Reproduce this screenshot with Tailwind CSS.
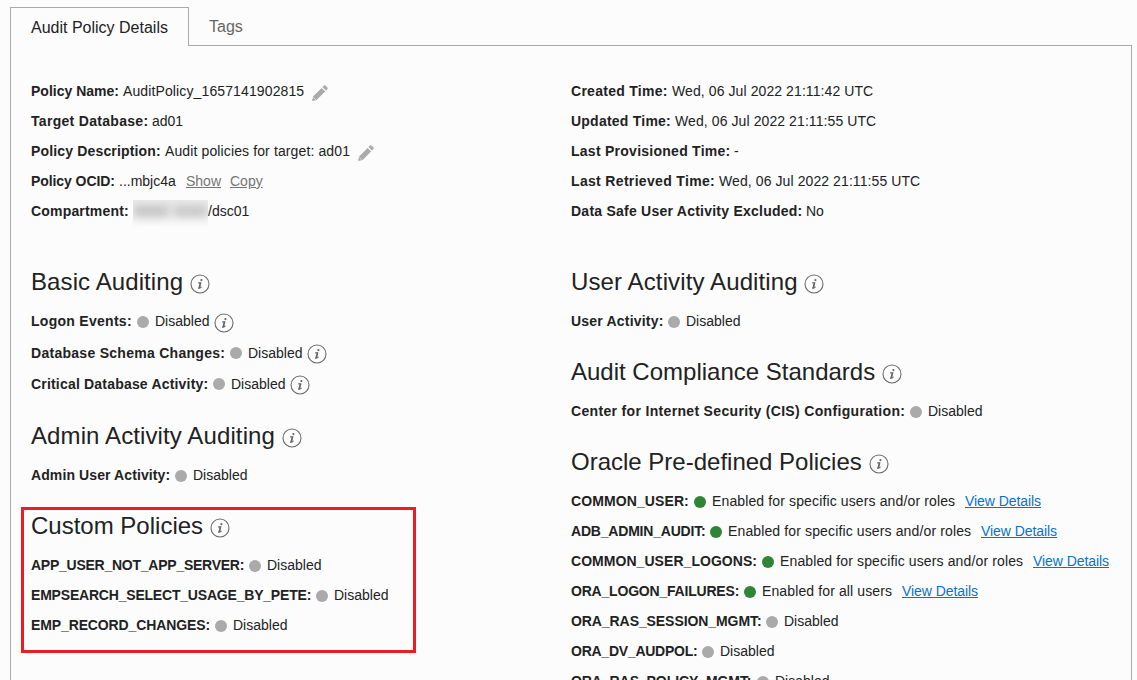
<!DOCTYPE html>
<html lang="en">
<head>
<meta charset="utf-8">
<title>Audit Policy Details</title>
<script src="https://cdn.jsdelivr.net/npm/@tailwindcss/browser@4"></script>
</head>
<body class="h-[680px] overflow-hidden bg-[#fcfcfc] font-['Liberation_Sans',Arial,sans-serif] text-sm leading-[30px] whitespace-nowrap text-[#222]">
<svg class="hidden">
  <symbol id="info" viewBox="0 0 20 20"><circle cx="10" cy="10" r="9" fill="none" stroke="#6c6c6c" stroke-width="1.1"/><circle cx="11.4" cy="6.1" r="1.1" fill="#666"/><path d="M8.2 8.900H10.700L9.300 14.100M8 14.100H9.600Q10.800 14 11.500 12.800" fill="none" stroke="#666" stroke-width="1.1"/><path d="M10.500 8.700L9.200 13.900" fill="none" stroke="#666" stroke-width="1.5"/></symbol>
  <symbol id="pencil" viewBox="0 0 16 16"><path fill="#aaa" d="M0 16L1.100 11.400 9.600 2.900 13.100 6.400 4.600 14.900ZM10.500 2L12 .5Q12.700 0 13.400.5L15.500 2.600Q16 3.300 15.500 4L14 5.500Z"/><path stroke="#fcfcfc" stroke-width=".6" d="M1.300 12.300L3.700 14.700"/></symbol>
</svg>
<div class="flex h-full flex-col pt-[7px] pr-[5px] pl-2.5">
  <nav class="flex h-[39px] shrink-0 text-base">
    <div class="w-[179px] border border-b-0 border-[#aaa] pt-2 pl-5 leading-[24px]"><span class="block pt-px leading-[22px]">Audit Policy Details</span></div>
    <div class="grow border-b border-[#aaa] pt-2 pl-5 leading-[24px] text-[#666]">Tags</div>
  </nav>
  <main class="grid grow grid-cols-[540px_1fr] border-x border-[#aaa] pt-[30px] pl-5">
    <div>
      <section class="h-[180px]">
        <div class="flex h-[30px]"><b class="w-[92px]">Policy Name:</b><span class="w-[189px] tracking-[0.12px]">AuditPolicy_1657141902815</span><svg class="mt-[9px] size-4"><use href="#pencil"/></svg></div>
        <div class="flex h-[30px]"><b class="w-[121px] tracking-[0.3px]">Target Database:</b><span>ad01</span></div>
        <div class="flex h-[30px]"><b class="w-[134px] tracking-[0.16px]">Policy Description:</b><span class="w-[193px] tracking-[0.12px]">Audit policies for target: ad01</span><svg class="mt-[9px] size-4"><use href="#pencil"/></svg></div>
        <div class="flex h-[30px]"><b class="w-[88px] tracking-[-0.08px]">Policy OCID:</b><span class="w-[67px]">...mbjc4a</span><a class="w-11 text-[#757575] underline">Show</a><a class="text-[#757575] underline">Copy</a></div>
        <div class="flex h-[30px]"><b class="w-[102px] tracking-[0.18px]">Compartment:</b><span class="mt-1 flex h-[26px] w-[75px] items-center gap-1 overflow-hidden bg-linear-to-b from-[#ededed] to-[#fbfbfb] pb-1"><i class="h-3 w-9 bg-[#c2c2c2] blur-[5px]"></i><i class="h-3 w-9 bg-[#c6c6c6] blur-[5px]"></i></span><span>/dsc01</span></div>
      </section>
      <section class="mb-2.5">
        <h2 class="flex h-[50px] gap-[7px] pt-[11px] text-2xl leading-[30px]"><span class="w-[152px] tracking-[0.1px]">Basic Auditing</span><svg class="mt-[7px] size-5"><use href="#info"/></svg></h2>
        <div class="flex h-8"><b class="w-[106px] tracking-[0.28px]">Logon Events:</b><i class="mt-[10px] mr-1.5 size-3 rounded-full bg-[#aaa]"></i><span class="w-[59px]">Disabled</span><svg class="mt-[7px] size-5"><use href="#info"/></svg></div>
        <div class="flex h-[31px]"><b class="w-[199px] tracking-[0.28px]">Database Schema Changes:</b><i class="mt-[9px] mr-1.5 size-3 rounded-full bg-[#aaa]"></i><span class="w-[59px]">Disabled</span><svg class="mt-1.5 size-5"><use href="#info"/></svg></div>
        <div class="flex h-[31px]"><b class="w-[182px] tracking-[0.19px]">Critical Database Activity:</b><i class="mt-[9px] mr-1.5 size-3 rounded-full bg-[#aaa]"></i><span class="w-[59px]">Disabled</span><svg class="mt-1.5 size-5"><use href="#info"/></svg></div>
      </section>
      <section class="mb-2.5">
        <h2 class="flex h-[50px] gap-[7px] pt-[11px] text-2xl leading-[30px]"><span class="w-[244px] tracking-[0.11px]">Admin Activity Auditing</span><svg class="mt-[7px] size-5"><use href="#info"/></svg></h2>
        <div class="flex h-[30px]"><b class="w-[144px] tracking-[0.1px]">Admin User Activity:</b><i class="mt-[10px] mr-1.5 size-3 rounded-full bg-[#aaa]"></i><span>Disabled</span></div>
      </section>
      <section class="relative">
        <div class="absolute top-[7px] -left-2.5 h-[146px] w-[395px] border-3 border-[#ed1c24]"></div>
        <h2 class="flex h-[50px] gap-[7px] pt-[11px] text-2xl leading-[30px]"><span class="w-[172px]">Custom Policies</span><svg class="mt-[7px] size-5"><use href="#info"/></svg></h2>
        <div class="flex h-[30px]"><b class="w-[218px] tracking-[-0.25px]">APP_USER_NOT_APP_SERVER:</b><i class="mt-[10px] mr-1.5 size-3 rounded-full bg-[#aaa]"></i><span>Disabled</span></div>
        <div class="flex h-[30px]"><b class="w-[285px] tracking-[-0.2px]">EMPSEARCH_SELECT_USAGE_BY_PETE:</b><i class="mt-[10px] mr-1.5 size-3 rounded-full bg-[#aaa]"></i><span>Disabled</span></div>
        <div class="flex h-[30px]"><b class="w-[184px] tracking-[-0.12px]">EMP_RECORD_CHANGES:</b><i class="mt-[10px] mr-1.5 size-3 rounded-full bg-[#aaa]"></i><span>Disabled</span></div>
      </section>
    </div>
    <div>
      <section class="h-[180px]">
        <div class="flex h-[30px]"><b class="w-[101px] tracking-[0.27px]">Created Time:</b><span class="tracking-[0.09px]">Wed, 06 Jul 2022 21:11:42 UTC</span></div>
        <div class="flex h-[30px]"><b class="w-[104px] tracking-[0.23px]">Updated Time:</b><span class="tracking-[0.09px]">Wed, 06 Jul 2022 21:11:55 UTC</span></div>
        <div class="flex h-[30px]"><b class="w-[163px] tracking-[0.26px]">Last Provisioned Time:</b><span>-</span></div>
        <div class="flex h-[30px]"><b class="w-[148px] tracking-[0.33px]">Last Retrieved Time:</b><span class="tracking-[0.09px]">Wed, 06 Jul 2022 21:11:55 UTC</span></div>
        <div class="flex h-[30px]"><b class="w-[235px] tracking-[0.24px]">Data Safe User Activity Excluded:</b><span>No</span></div>
      </section>
      <section class="mb-2.5">
        <h2 class="flex h-[50px] gap-[7px] pt-[11px] text-2xl leading-[30px]"><span class="w-[226px] tracking-[0.12px]">User Activity Auditing</span><svg class="mt-[7px] size-5"><use href="#info"/></svg></h2>
        <div class="flex h-[30px]"><b class="w-[97px] tracking-[0.2px]">User Activity:</b><i class="mt-[10px] mr-1.5 size-3 rounded-full bg-[#aaa]"></i><span>Disabled</span></div>
      </section>
      <section class="mb-2.5">
        <h2 class="flex h-[50px] gap-[7px] pt-[11px] text-2xl leading-[30px]"><span class="w-[304px]">Audit Compliance Standards</span><svg class="mt-[7px] size-5"><use href="#info"/></svg></h2>
        <div class="flex h-[30px]"><b class="w-[339px] tracking-[0.33px]">Center for Internet Security (CIS) Configuration:</b><i class="mt-[10px] mr-1.5 size-3 rounded-full bg-[#aaa]"></i><span>Disabled</span></div>
      </section>
      <section>
        <h2 class="flex h-[50px] gap-[7px] pt-[11px] text-2xl leading-[30px]"><span class="w-[291px]">Oracle Pre-defined Policies</span><svg class="mt-[7px] size-5"><use href="#info"/></svg></h2>
        <div class="flex h-[30px]"><b class="w-[123px] tracking-[0.1px]">COMMON_USER:</b><i class="mt-[10px] mr-1.5 size-3 rounded-full bg-[#2f8436]"></i><span class="w-[253px] tracking-[0.13px]">Enabled for specific users and/or roles</span><a class="tracking-[-0.06px] text-[#0572ce] underline">View Details</a></div>
        <div class="flex h-[30px]"><b class="w-[139px] tracking-[-0.2px]">ADB_ADMIN_AUDIT:</b><i class="mt-[10px] mr-1.5 size-3 rounded-full bg-[#2f8436]"></i><span class="w-[253px] tracking-[0.13px]">Enabled for specific users and/or roles</span><a class="tracking-[-0.06px] text-[#0572ce] underline">View Details</a></div>
        <div class="flex h-[30px]"><b class="w-[191px] tracking-[0.05px]">COMMON_USER_LOGONS:</b><i class="mt-[10px] mr-1.5 size-3 rounded-full bg-[#2f8436]"></i><span class="w-[253px] tracking-[0.13px]">Enabled for specific users and/or roles</span><a class="tracking-[-0.06px] text-[#0572ce] underline">View Details</a></div>
        <div class="flex h-[30px]"><b class="w-[173px] tracking-[-0.2px]">ORA_LOGON_FAILURES:</b><i class="mt-[10px] mr-1.5 size-3 rounded-full bg-[#2f8436]"></i><span class="w-[140px] tracking-[0.12px]">Enabled for all users</span><a class="tracking-[-0.06px] text-[#0572ce] underline">View Details</a></div>
        <div class="flex h-[30px]"><b class="w-[195px] tracking-[-0.08px]">ORA_RAS_SESSION_MGMT:</b><i class="mt-[10px] mr-1.5 size-3 rounded-full bg-[#aaa]"></i><span>Disabled</span></div>
        <div class="flex h-[30px]"><b class="w-[131px] tracking-[-0.25px]">ORA_DV_AUDPOL:</b><i class="mt-[10px] mr-1.5 size-3 rounded-full bg-[#aaa]"></i><span>Disabled</span></div>
        <div class="flex h-[14px]"><b class="w-[186px] tracking-[-0.08px]">ORA_RAS_POLICY_MGMT:</b><i class="mt-[10px] mr-1.5 size-3 shrink-0 rounded-full bg-[#aaa]"></i><span>Disabled</span></div>
      </section>
    </div>
  </main>
</div>
</body>
</html>
